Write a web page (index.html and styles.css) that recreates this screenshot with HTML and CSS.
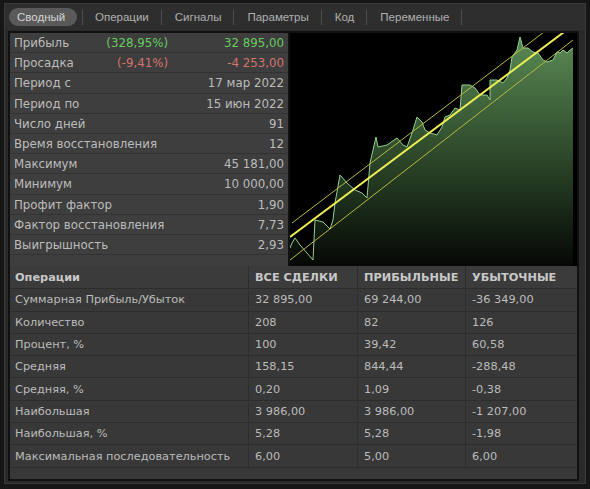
FILE: index.html
```html
<!DOCTYPE html>
<html>
    <head>
        <title>Результаты тестирования</title>
        <link rel="stylesheet" href="styles.css">
    </head>
<body>
    <div class="window">
        <div class="tabs">
            <div class="tab active">Сводный</div>
            <div class="tab">Операции</div>
            <div class="tab">Сигналы</div>
            <div class="tab">Параметры</div>
            <div class="tab">Код</div>
            <div class="tab">Переменные</div>
        </div>

        <div class="panel">
            <div class="top">
                <div class="stats">
                    <div class="row">
                        <span class="label short">Прибыль</span>
                        <span class="pct green">(328,95%)</span>
                        <span class="value green">32 895,00</span>
                    </div>
                    <div class="row">
                        <span class="label short">Просадка</span>
                        <span class="pct red">(-9,41%)</span>
                        <span class="value red">-4 253,00</span>
                    </div>
                    <div class="row"><span class="label">Период с</span><span class="value">17 мар 2022</span></div>
                    <div class="row"><span class="label">Период по</span><span class="value">15 июн 2022</span></div>
                    <div class="row"><span class="label">Число дней</span><span class="value">91</span></div>
                    <div class="row"><span class="label">Время восстановления</span><span class="value">12</span></div>
                    <div class="row"><span class="label">Максимум</span><span class="value">45 181,00</span></div>
                    <div class="row"><span class="label">Минимум</span><span class="value">10 000,00</span></div>
                    <div class="row"><span class="label">Профит фактор</span><span class="value">1,90</span></div>
                    <div class="row"><span class="label">Фактор восстановления</span><span class="value">7,73</span></div>
                    <div class="row"><span class="label">Выигрышность</span><span class="value">2,93</span></div>
                </div>

                <div class="chart">
                    <svg width="285" height="233" viewBox="0 0 285 233">
                        <defs>
                            <linearGradient id="fill" x1="0" y1="0" x2="0" y2="1">
                                <stop offset="0" stop-color="#5a8a54"/>
                                <stop offset="0.5" stop-color="#2e4a2b"/>
                                <stop offset="1" stop-color="#050805"/>
                            </linearGradient>
                        </defs>
                        <path fill="url(#fill)" d="M0,215 L2,210 L5,205 L10,212 L17,220 L23,227 L25,187 L33,189 L40,196 L43,187 L45,170 L50,142 L57,150 L65,157 L72,160 L77,165 L80,130 L86,104 L88,114 L97,112 L107,105 L113,112 L117,114 L122,100 L127,84 L132,89 L135,97 L140,100 L147,102 L152,94 L155,84 L160,82 L165,75 L170,77 L172,52 L180,52 L185,55 L190,62 L197,62 L200,67 L200,47 L207,47 L213,50 L217,45 L220,37 L222,24 L227,17 L230,4 L233,15 L238,15 L243,19 L248,20 L253,27 L257,29 L263,27 L267,19 L270,20 L273,17 L277,20 L280,17 L283,15 L283,233 L0,233 Z"/>
                        <path fill="none" stroke="#93d08c" stroke-width="1" d="M0,215 L2,210 L5,205 L10,212 L17,220 L23,227 L25,187 L33,189 L40,196 L43,187 L45,170 L50,142 L57,150 L65,157 L72,160 L77,165 L80,130 L86,104 L88,114 L97,112 L107,105 L113,112 L117,114 L122,100 L127,84 L132,89 L135,97 L140,100 L147,102 L152,94 L155,84 L160,82 L165,75 L170,77 L172,52 L180,52 L185,55 L190,62 L197,62 L200,67 L200,47 L207,47 L213,50 L217,45 L220,37 L222,24 L227,17 L230,4 L233,15 L238,15 L243,19 L248,20 L253,27 L257,29 L263,27 L267,19 L270,20 L273,17 L277,20 L280,17 L283,15"/>
                        <line x1="2" y1="190" x2="254" y2="-1" stroke="#b8b840" stroke-width="1"/>
                        <line x1="0" y1="227" x2="283" y2="7" stroke="#b8b840" stroke-width="1"/>
                        <line x1="0" y1="204" x2="274" y2="-1" stroke="#eeee55" stroke-width="2"/>
                    </svg>
                </div>
            </div>

            <table class="ops">
                <tr>
                    <th class="c1">Операции</th>
                    <th class="c2">ВСЕ СДЕЛКИ</th>
                    <th class="c3">ПРИБЫЛЬНЫЕ</th>
                    <th class="c4">УБЫТОЧНЫЕ</th>
                </tr>
                <tr><td>Суммарная Прибыль/Убыток</td><td>32 895,00</td><td>69 244,00</td><td>-36 349,00</td></tr>
                <tr><td>Количество</td><td>208</td><td>82</td><td>126</td></tr>
                <tr><td>Процент, %</td><td>100</td><td>39,42</td><td>60,58</td></tr>
                <tr><td>Средняя</td><td>158,15</td><td>844,44</td><td>-288,48</td></tr>
                <tr><td>Средняя, %</td><td>0,20</td><td>1,09</td><td>-0,38</td></tr>
                <tr><td>Наибольшая</td><td>3 986,00</td><td>3 986,00</td><td>-1 207,00</td></tr>
                <tr><td>Наибольшая, %</td><td>5,28</td><td>5,28</td><td>-1,98</td></tr>
                <tr><td>Максимальная последовательность</td><td>6,00</td><td>5,00</td><td>6,00</td></tr>
                <tr class="empty"><td></td><td></td><td></td><td></td></tr>
            </table>
        </div>
    </div>
</body>
</html>
```

FILE: styles.css
```css
body {
    margin: 0;
    background-color: #161616;
    font-family: "DejaVu Sans", sans-serif;
    font-size: 11.8px;
    color: #bcbcbc;
    overflow: hidden;
}

.window {
    margin: 3px 4px 0 4px;
    border: 1px solid #3a3a3a;
    background-color: #2a2a2a;
    height: 481px;
    box-sizing: border-box;
}

.tabs {
    display: flex;
    align-items: center;
    height: 26px;
    padding-left: 4px;
    background-color: #2e2e2e;
    font-family: "Liberation Sans", sans-serif;
    font-size: 11.5px;
}

.tab {
    position: relative;
    padding: 0 13px;
    line-height: 18px;
    color: #b0b0b0;
    white-space: nowrap;
}

.tab::after {
    content: "";
    position: absolute;
    right: 0;
    top: 2px;
    width: 1px;
    height: 15px;
    background-color: #4e4e4e;
}

.tab.active {
    width: 52px;
    margin-right: 5px;
    padding: 0 8px;
    background-color: #5a5a5a;
    border-radius: 9px;
    color: #d4d4d4;
}

.tab.active::after {
    right: -6px;
}

.panel {
    margin: 1px 6px 0 3px;
    border: 2px solid #111;
    background-color: #111;
}

.top {
    display: flex;
    gap: 2px;
}

.stats {
    width: 278px;
    height: 233px;
    background-color: #3e3e3e;
}

.row {
    display: flex;
    height: 19.2px;
    line-height: 20px;
    border-bottom: 1px solid #333;
    padding: 0 4px;
}

.label {
    flex: 1;
    white-space: nowrap;
}

.label.short {
    flex: none;
    width: 86px;
}

.pct {
    width: 68px;
    text-align: right;
}

.value {
    flex: 1;
    text-align: right;
}

.green {
    color: #66cc5e;
}

.red {
    color: #d4736c;
}

.chart {
    flex: 1;
    height: 233px;
    background-color: #000;
    overflow: hidden;
}

.chart svg {
    display: block;
}

.ops {
    width: 100%;
    border-collapse: collapse;
    background-color: #383838;
    font-size: 11.3px;
}

.ops th,
.ops td {
    height: 21.3px;
    padding: 0 0 0 6px;
    border-bottom: 1px solid #2d2d2d;
    border-left: 1px solid #2d2d2d;
    text-align: left;
    white-space: nowrap;
}

.ops th {
    padding-top: 1px;
    font-weight: bold;
    color: #c8c8c8;
    background-color: #3b3b3b;
}

.ops .c1 {
    width: 233px;
}

.ops .c2 {
    width: 102px;
}

.ops .c3 {
    width: 101px;
}

.ops th:first-child,
.ops td:first-child {
    border-left: none;
    padding-left: 5px;
}

.ops tr.empty td {
    height: 11px;
    border: none;
}
```
